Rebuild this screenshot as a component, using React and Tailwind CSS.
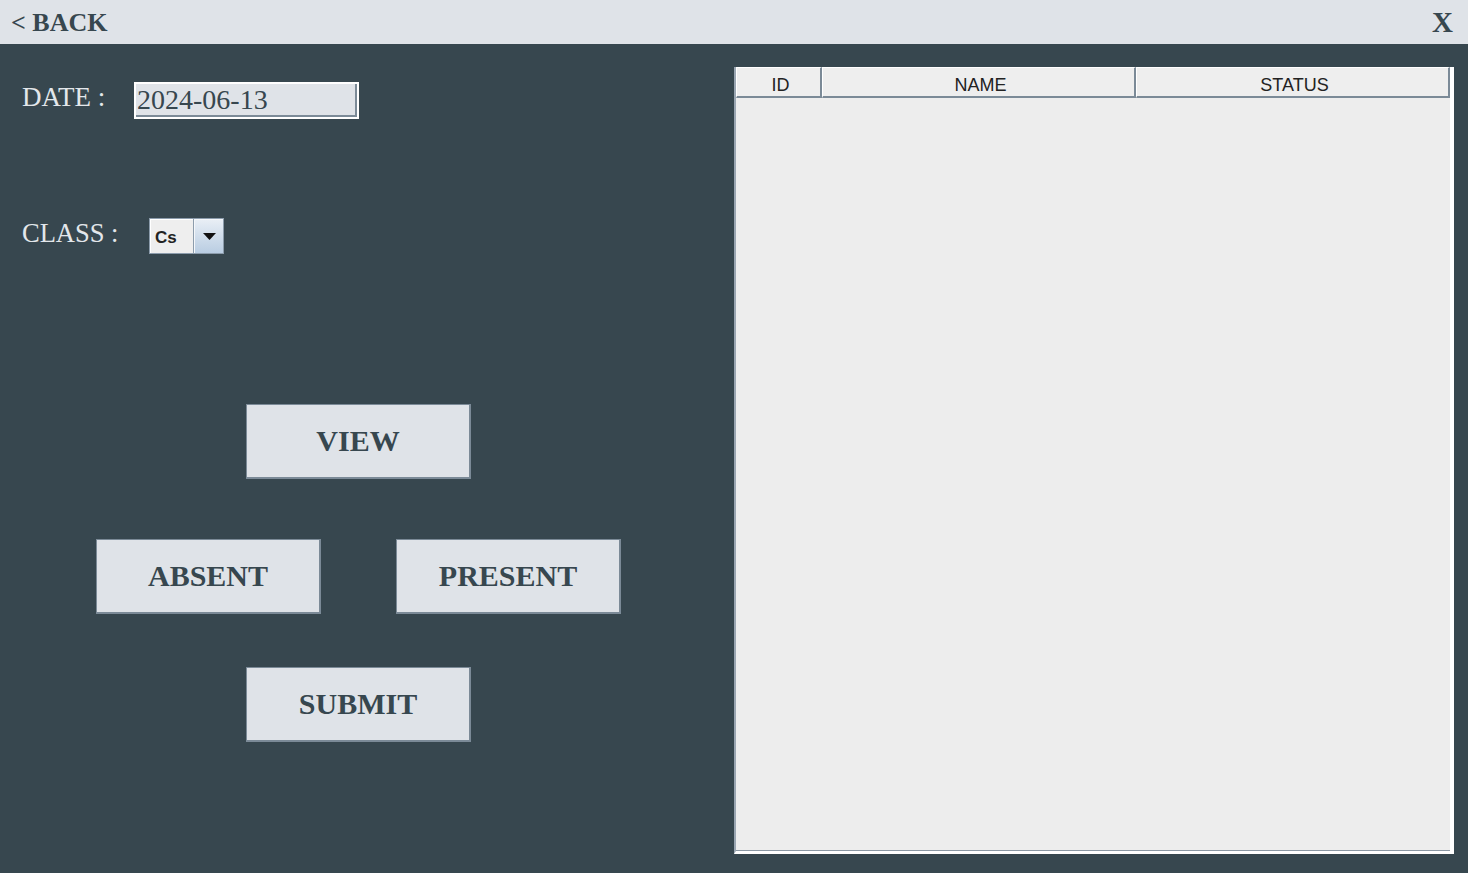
import React from 'react';

const serif = { fontFamily: '"Liberation Serif", "Times New Roman", serif' };

const ActionButton = ({ label }) => (
  <button
    className="w-[225px] h-[75px] bg-[#dfe3e8] border border-[#7b8a97] border-r-2 border-b-2 text-[#37474f] text-[30px] font-bold leading-none"
    style={serif}
  >
    {label}
  </button>
);

const App = () => {
  return (
    <div className="w-[1468px] h-[873px] bg-[#37474f] flex flex-col overflow-hidden">
      {/* Top bar */}
      <div className="h-[44px] shrink-0 bg-[#dfe3e8] flex items-center justify-between pl-[11px] pr-[15px] pt-[1px]" style={serif}>
        <span className="text-[26px] font-bold text-[#37474f] leading-none">&lt; BACK</span>
        <span className="text-[29px] font-bold text-[#37474f] leading-none">X</span>
      </div>

      <div className="flex flex-1">
        {/* Left form */}
        <div className="w-[734px] shrink-0 flex flex-col" style={serif}>
          <div className="mt-[38px] h-[37px] flex items-center">
            <span className="w-[134px] pl-[22px] pb-[6px] text-[27px] text-[#e3e7eb] leading-none">DATE :</span>
            <div className="w-[225px] h-[37px] border-2 border-white">
              <div className="w-full h-full bg-[#dfe3e8] border-r-2 border-b-2 border-[#7b8a97] flex items-center pl-[1px] pt-[1px] text-[28px] text-[#37474f] leading-none">
                2024-06-13
              </div>
            </div>
          </div>

          <div className="mt-[99px] h-[36px] flex items-center">
            <span className="w-[149px] pl-[22px] pb-[6px] text-[26.5px] text-[#e3e7eb] leading-none">CLASS :</span>
            <div className="w-[75px] h-[36px] flex border border-[#8c9cac] bg-[#8c9cac]">
              <div className="w-[43px] h-full bg-[#eeeeee] border-t border-l border-white flex items-center pl-[4px] pt-[2px] text-[17px] font-bold text-[#222] leading-none" style={{ fontFamily: '"Liberation Sans", Arial, sans-serif' }}>
                Cs
              </div>
              <div className="ml-[1px] flex-1 h-full bg-gradient-to-b from-[#e8eef5] to-[#b9cde2] border-t border-l border-[#f4f7fa] flex items-center justify-center">
                <svg width="13" height="7" viewBox="0 0 13 7">
                  <path d="M0 0 L13 0 L6.5 7 Z" fill="#111" />
                </svg>
              </div>
            </div>
          </div>

          <div className="mt-[150px] pl-[246px]">
            <ActionButton label="VIEW" />
          </div>

          <div className="mt-[60px] pl-[96px] flex gap-[75px]">
            <ActionButton label="ABSENT" />
            <ActionButton label="PRESENT" />
          </div>

          <div className="mt-[53px] pl-[246px]">
            <ActionButton label="SUBMIT" />
          </div>
        </div>

        {/* Table */}
        <div className="mt-[23px] w-[720px] h-[787px] border-l-2 border-[#9aa6b2] border-r-[4px] border-r-white border-b-[3px] border-b-white flex flex-col bg-[#ededed]">
          <div className="flex-1 flex flex-col border-b border-[#8c98a4]">
            <div
              className="h-[31px] flex text-[18px] text-[#222] leading-none"
              style={{ fontFamily: '"Liberation Sans", Arial, sans-serif' }}
            >
              <div className="w-[86px] flex items-center justify-center pt-[5px] pl-[4px] bg-[#eeeeee] border-t border-l border-white border-r-2 border-r-[#7b8a97] border-b-2 border-b-[#7b8a97]">ID</div>
              <div className="w-[314px] flex items-center justify-center pt-[5px] pl-[4px] bg-[#eeeeee] border-t border-l border-white border-r-2 border-r-[#7b8a97] border-b-2 border-b-[#7b8a97]">NAME</div>
              <div className="w-[314px] flex items-center justify-center pt-[5px] pl-[4px] bg-[#eeeeee] border-t border-l border-white border-r-2 border-r-[#7b8a97] border-b-2 border-b-[#7b8a97]">STATUS</div>
            </div>
            <div className="flex-1" />
          </div>
        </div>
      </div>
    </div>
  );
};

export default App;
